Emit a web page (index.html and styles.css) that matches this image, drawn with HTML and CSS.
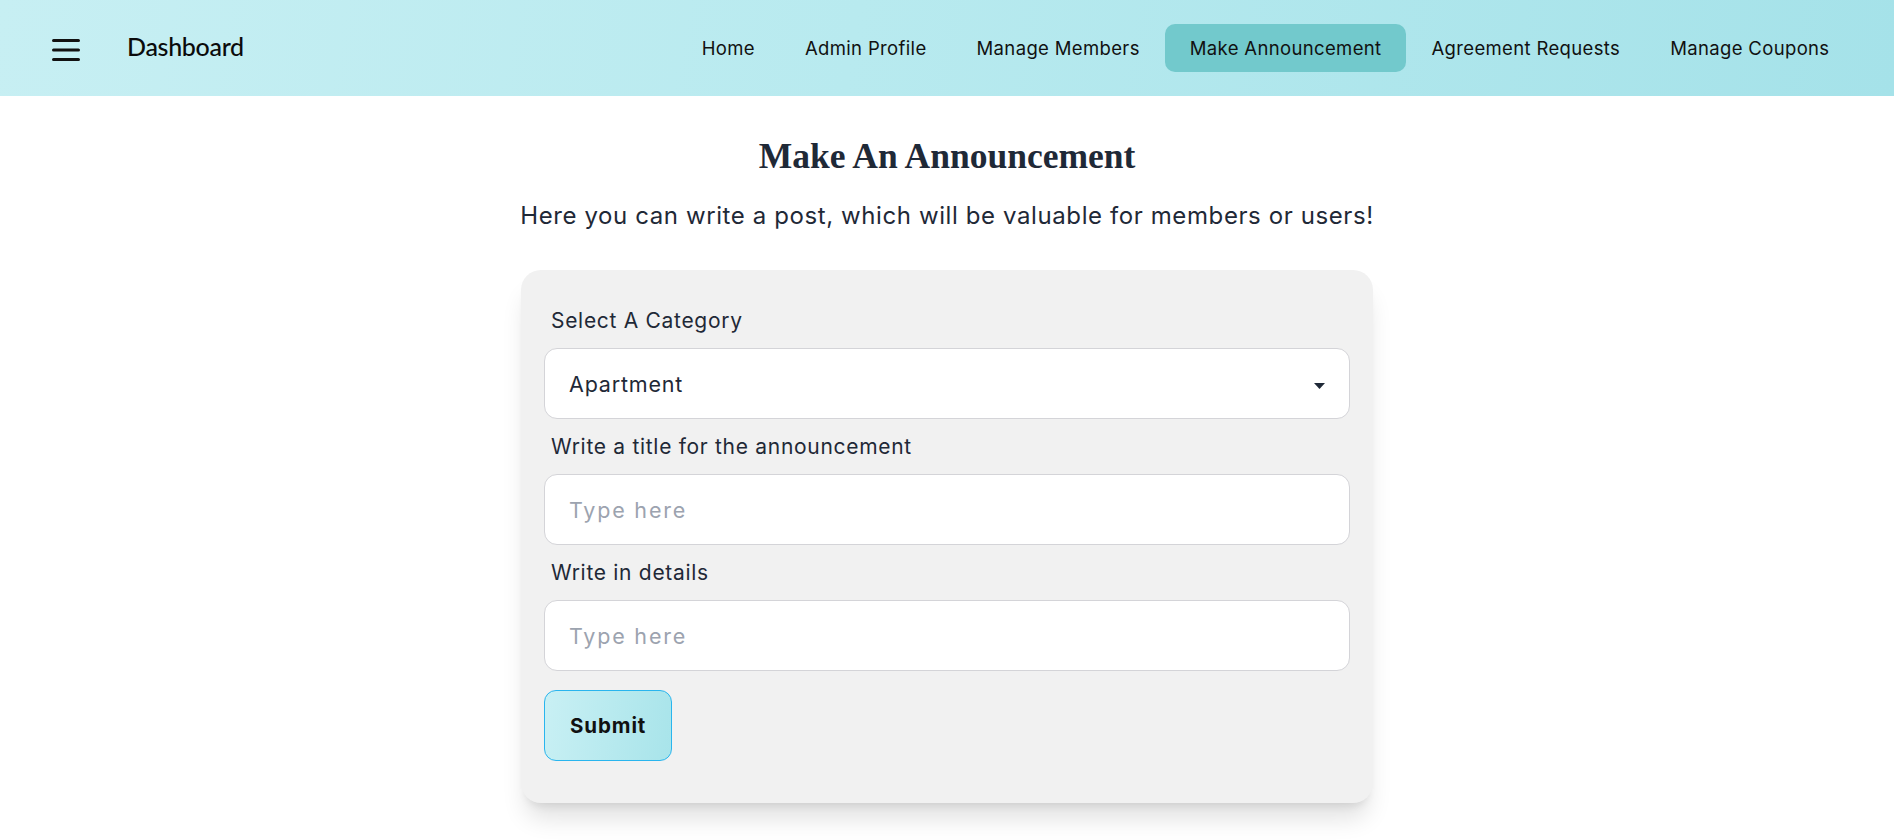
FILE: index.html
```html
<!DOCTYPE html>
<html lang="en">
<head>
<meta charset="utf-8">
<title>Dashboard - Make Announcement</title>
<link rel="stylesheet" href="styles.css">
</head>
<body>
<header class="navbar">
  <div class="navbar-start">
    <button class="burger" aria-label="menu">
      <svg width="28" height="24" viewBox="0 0 28 24"><path d="M1.5 3.5h25M1.5 13h25M1.5 22.5h25" stroke="#111" stroke-width="3" stroke-linecap="round"/></svg>
    </button>
    <span class="brand">Dashboard</span>
  </div>
  <nav class="menu">
    <a class="menu-item" href="#">Home</a>
    <a class="menu-item" href="#">Admin Profile</a>
    <a class="menu-item" href="#">Manage Members</a>
    <a class="menu-item active" href="#">Make Announcement</a>
    <a class="menu-item" href="#">Agreement Requests</a>
    <a class="menu-item" href="#">Manage Coupons</a>
  </nav>
</header>
<main class="main">
  <h1 class="title">Make An Announcement</h1>
  <p class="subtitle">Here you can write a post, which will be valuable for members or users!</p>
  <form class="card">
    <label class="label">Select A Category</label>
    <div class="select-wrap">
      <select class="field select">
        <option>Apartment</option>
      </select>
      <svg class="caret" width="11" height="6" viewBox="0 0 11 6"><path d="M0 0h11L5.5 6z" fill="#1f2937"/></svg>
    </div>
    <label class="label">Write a title for the announcement</label>
    <input class="field" type="text" placeholder="Type here">
    <label class="label">Write in details</label>
    <input class="field" type="text" placeholder="Type here">
    <div class="actions">
      <button class="submit" type="button">Submit</button>
    </div>
  </form>
</main>
</body>
</html>
```
FILE: styles.css
```css
* { box-sizing: border-box; }
html, body { margin: 0; padding: 0; }
body {
  font-family: Inter, "Noto Sans", sans-serif;
  color: #1f2937;
  background: #fff;
  width: 1894px;
  height: 840px;
  overflow: hidden;
}
.navbar {
  height: 96px;
  display: flex;
  align-items: center;
  justify-content: space-between;
  padding: 0 40px 0 52px;
  background: linear-gradient(100deg, #c7eff3 0%, #b8eaef 45%, #a5e2e9 100%);
}
.navbar-start {
  display: flex;
  align-items: center;
  gap: 47px;
}
.burger {
  background: none;
  border: 0;
  padding: 0;
  width: 28px;
  height: 24px;
  display: flex;
  margin-top: 2px;
}
.brand {
  font-family: "Comic Sans MS", Lato, sans-serif;
  font-size: 25px;
  font-weight: 500;
  color: #0b0b0b;
  margin-top: -4px;
  letter-spacing: -0.3px;
}
.menu {
  display: flex;
  align-items: center;
  gap: 1px;
}
.menu-item {
  display: flex;
  align-items: center;
  height: 48px;
  padding: 0 24.5px;
  border-radius: 10px;
  font-size: 18.5px;
  letter-spacing: 0.35px;
  color: #111;
  text-decoration: none;
}
.menu-item.active {
  background: #72c9cc;
}
.main {
  display: flex;
  flex-direction: column;
  align-items: center;
  padding-top: 38px;
}
.title {
  margin: 0;
  font-family: "Liberation Serif", "Times New Roman", serif;
  font-weight: 700;
  font-size: 35.5px;
  line-height: 44px;
  color: #1f2937;
}
.subtitle {
  margin: 22px 0 0;
  font-size: 24px;
  letter-spacing: 0.6px;
  line-height: 32px;
  color: #1f2937;
}
.card {
  margin-top: 38px;
  width: 852px;
  background: #f1f1f1;
  border-radius: 20px;
  padding: 23px 23px 42px 23px;
  display: flex;
  flex-direction: column;
  box-shadow: 0 20px 25px -5px rgba(0,0,0,0.12), 0 8px 10px -6px rgba(0,0,0,0.1);
}
.label {
  height: 55px;
  display: flex;
  align-items: center;
  padding-left: 7px;
  font-size: 21px;
  letter-spacing: 0.7px;
  color: #1f2937;
}
.select-wrap {
  position: relative;
}
.field {
  width: 100%;
  height: 71px;
  border: 1px solid #d4d4d8;
  border-radius: 13px;
  background: #fff;
  padding: 0 24px;
  font-family: Inter, "Noto Sans", sans-serif;
  font-size: 21.5px;
  letter-spacing: 0.8px;
  color: #1f2937;
  outline: none;
}
.field::placeholder {
  color: #9ca3af;
  letter-spacing: 1.8px;
}
.select {
  appearance: none;
  -webkit-appearance: none;
}
.caret {
  position: absolute;
  right: 25px;
  top: 35px;
}
.actions {
  margin-top: 19px;
  display: flex;
}
.submit {
  height: 71px;
  padding: 0 25px;
  border: 1px solid #29b5ee;
  border-radius: 12px;
  background: linear-gradient(100deg, #c9f0f4 0%, #a8e4ea 100%);
  font-family: Inter, "Noto Sans", sans-serif;
  font-size: 20.5px;
  letter-spacing: 0.9px;
  font-weight: 700;
  color: #111;
}
```
